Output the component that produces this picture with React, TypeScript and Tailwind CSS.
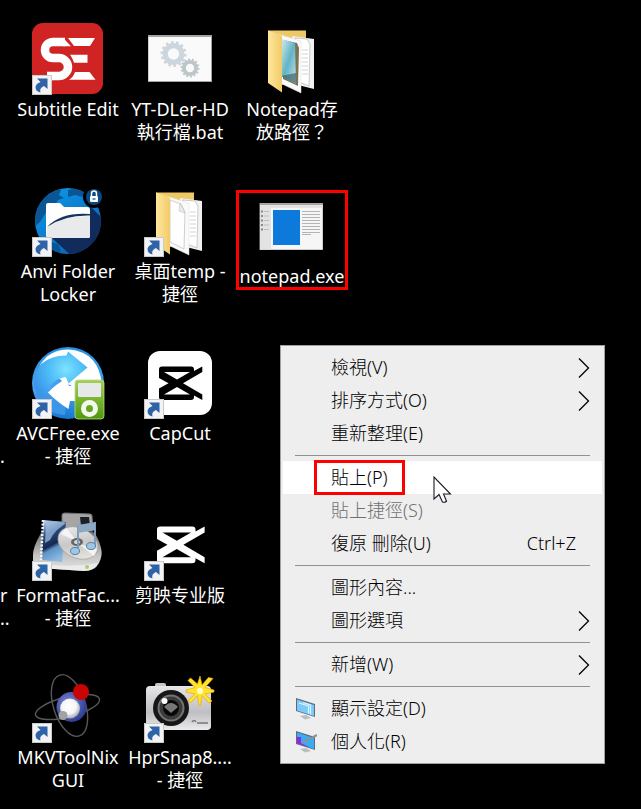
import type { ReactNode } from 'react'

interface DesktopItem {
  id: string
  lines: string[]
  icon: ReactNode
  shortcut?: boolean
  marked?: boolean
}

interface MenuEntry {
  label: string
  hint?: string
  icon?: ReactNode
  submenu?: boolean
  disabled?: boolean
  active?: boolean
}

// ---------- Desktop icons (72x72 canvas) ----------

function Canvas({ children }: { children: ReactNode }) {
  return (
    <svg viewBox="0 0 72 72" className="size-18 overflow-visible" aria-hidden="true">
      {children}
    </svg>
  )
}

function SubtitleEditIcon() {
  return (
    <Canvas>
      <rect width="71" height="71" rx="11" fill="#d02424" />
      <path d="M33 19H21a8 8 0 0 0 0 16h6a9 9 0 0 1 0 18H15" fill="none" stroke="#fff" strokeWidth="8.500" />
      <path d="M31 14.700l8 8.500h-8zM18 48.500l-4 8.700h7z" fill="#fff" />
      <path d="M36 15h27l-5 8H42zM38 31.700h17.500v8H42c-1-3-2-5-4-8zM43 49h14.500l6 7.800H37c3-2 5-4.500 6-7.800z" fill="#fff" />
    </Canvas>
  )
}

function Gear({ cx, cy, r, fill }: { cx: number; cy: number; r: number; fill: string }) {
  return (
    <g fill="none" stroke={fill}>
      <circle cx={cx} cy={cy} r={r * 0.64} strokeWidth={r * 0.4} />
      <circle cx={cx} cy={cy} r={r * 0.88} strokeWidth={r * 0.24} pathLength="28" strokeDasharray="1 1" />
    </g>
  )
}

function BatchFileIcon() {
  return (
    <Canvas>
      <rect x="4" y="12" width="64" height="47" fill="#a3a3a3" />
      <rect x="4.500" y="14" width="62.500" height="44" fill="#fafafa" />
      <Gear cx={29.5} cy={31} r={13} fill="#ccd6dc" />
      <Gear cx={46} cy={45} r={9.5} fill="#bcc6cb" />
    </Canvas>
  )
}

function FolderIcon({ preview = false }: { preview?: boolean }) {
  return (
    <Canvas>
      <defs>
        <linearGradient id="folderCover" x1="0" x2="1">
          <stop offset="0" stopColor="#ffe79c" />
          <stop offset="1" stopColor="#f1cb69" />
        </linearGradient>
        <linearGradient id="folderPhoto" x1="0" y1="0" x2="1" y2="1">
          <stop offset="0" stopColor="#d8eef2" />
          <stop offset="0.500" stopColor="#62b3c4" />
          <stop offset="1" stopColor="#c6e6ea" />
        </linearGradient>
      </defs>
      <path d="M12 7.500h38v50L25 62 12 50z" fill="#efc866" />
      <path d="M36 13l22 3v50l-20-5z" fill="#f2f2f2" />
      <path d="M39 15l12 1 3 5-1 42-10-4z" fill="#fff" stroke="#b5b5b5" strokeWidth="0.700" />
      <path d="M46 27h6M46 31h6M46 35h6M46 39h6M46 43h6M46 47h6M46 51h6" stroke="#c8c8c8" strokeWidth="0.800" />
      <path d="M22 11l23 7v52L24 60z" fill="#fafafa" stroke="#ddd" strokeWidth="0.500" />
      {preview ? (
        <>
          <path d="M27 17l14 3 2 5-1 38-15-7z" fill="#7d7250" />
          <path d="M25 16l14 4 1 41-15-8z" fill="url(#folderPhoto)" />
          <path d="M25 53l15 8V50z" fill="#31505c" opacity="0.600" />
        </>
      ) : (
        <>
          <path d="M26 15l11 4 4 8-1 37-14-7z" fill="#fefefe" stroke="#bcbcbc" strokeWidth="0.700" />
          <path d="M36 18l-1 8 6 2z" fill="#eeece5" stroke="#b5b5b5" strokeWidth="0.500" />
        </>
      )}
      <path d="M12 7.500l12 4q2 1 2 3v55L12 60z" fill="url(#folderCover)" />
    </Canvas>
  )
}

function AnviIcon() {
  return (
    <Canvas>
      <defs>
        <linearGradient id="anviGlobe" x1="0.100" y1="0" x2="0.900" y2="1">
          <stop offset="0" stopColor="#0d9bec" />
          <stop offset="1" stopColor="#0a5cae" />
        </linearGradient>
        <clipPath id="anviClip">
          <circle cx="36" cy="36" r="33" />
        </clipPath>
      </defs>
      <circle cx="36" cy="36" r="33" fill="url(#anviGlobe)" />
      <g clipPath="url(#anviClip)">
        <path d="M3 24l10-14 9-7 7 2-2 5 5 3-6 2-3 5-6 1-4 8-5 8-6 5zM36 5l8-2 10 5-3 4-8-2-7 2zM18 57l8 2 3 6-5 8-6-6z" fill="#0a5694" />
        <path d="M20 53h38V21l14 14v40H44z" fill="#102b5c" />
      </g>
      <path d="M14 20q0-2 2-2h11q2 0 3 2l2 2h23q3 0 3 3v26q0 2-3 2H17q-3 0-3-3z" fill="#fff" />
      <path d="M15 43Q29 31 58 31v20q0 2-2 2H17q-2 0-2-2z" fill="#e9eaec" />
      <path d="M15 42Q29 27 58 29v1.500Q32 30 15 42z" fill="#14365f" />
      <circle cx="62" cy="12" r="11" fill="#000" />
      <circle cx="62" cy="12" r="8" fill="#0b4780" />
      <path d="M59.500 11V8.500a2.500 2.500 0 0 1 5 0V11" fill="none" stroke="#fff" strokeWidth="1.500" />
      <rect x="58" y="11" width="8" height="6" rx="1" fill="#fff" />
      <path d="M60.500 14h3" stroke="#0b4780" strokeWidth="1.200" />
    </Canvas>
  )
}

function AvcIcon() {
  return (
    <Canvas>
      <defs>
        <linearGradient id="avcDisc" x1="0" y1="0" x2="0" y2="1">
          <stop offset="0" stopColor="#2592e5" />
          <stop offset="0.600" stopColor="#4aa3ee" />
          <stop offset="1" stopColor="#1676cf" />
        </linearGradient>
        <radialGradient id="avcArrow" gradientUnits="userSpaceOnUse" cx="34" cy="22" r="34">
          <stop offset="0" stopColor="#7ee3ff" />
          <stop offset="0.500" stopColor="#4fbdf7" />
          <stop offset="1" stopColor="#3b96ea" />
        </radialGradient>
        <linearGradient id="avcPlayer" x1="0" y1="0" x2="0" y2="1">
          <stop offset="0" stopColor="#a6cf58" />
          <stop offset="1" stopColor="#4d9a0b" />
        </linearGradient>
      </defs>
      <circle cx="36" cy="36" r="36" fill="url(#avcDisc)" />
      <path d="M8 18Q18 2 37 2.500 67 5 70 38L50 44 30 34 16 20z" fill="#fff" />
      <path d="M2 37Q3 24 9 17 20 8 34.500 8.500L36 4.500 55.500 20.500 36.500 36.500 33.500 30Q20 32 16 45L34 56 33 68Q5 66 2 37z" fill="url(#avcArrow)" />
      <path d="M16 45.500Q24 37 34.500 31.500L37 39H50V54H38L36.500 62Q25 55 16 45.500z" fill="#fff" />
      <rect x="43" y="33" width="29" height="39" rx="3" fill="url(#avcPlayer)" stroke="#bddd83" strokeWidth="0.800" />
      <rect x="46" y="36" width="23" height="14" rx="1" fill="#e7e8ea" />
      <circle cx="57.500" cy="61.500" r="6" fill="none" stroke="#f5f8ef" strokeWidth="5" />
    </Canvas>
  )
}

// Crossed ribbon shared by both editors
function CutMark() {
  return (
    <path
      fillRule="evenodd"
      d="M18 19.500H47q3 0 3 3V24L58.300 19.500V25L39 36.200 58.300 47.500V53L50 48.500V50q0 3-3 3H18q-3 0-3-3V41.500L24.500 36.200 15 31V22.500q0-3 3-3zM20 25L33 32.500 46 25zM20 47.500H46L33 40z"
    />
  )
}

function CapCutIcon() {
  return (
    <Canvas>
      <rect x="4" y="4" width="64" height="64" rx="12" fill="#fff" />
      <CutMark />
    </Canvas>
  )
}

function JianyingIcon() {
  return (
    <Canvas>
      <g fill="#fff" transform="translate(-3.500 -4) scale(1.100)">
        <CutMark />
      </g>
    </Canvas>
  )
}

function FormatFactoryIcon() {
  return (
    <Canvas>
      <defs>
        <linearGradient id="ffDrive" x1="0" y1="0" x2="0" y2="1">
          <stop offset="0" stopColor="#6f6f6f" />
          <stop offset="0.600" stopColor="#c4c4c4" />
          <stop offset="1" stopColor="#e4e4e4" />
        </linearGradient>
        <linearGradient id="ffFilm" x1="0.200" y1="0" x2="0.500" y2="1">
          <stop offset="0" stopColor="#b8d3ee" />
          <stop offset="0.300" stopColor="#2c4f84" />
          <stop offset="0.600" stopColor="#14284e" />
          <stop offset="0.700" stopColor="#5d94c6" />
          <stop offset="1" stopColor="#8fbbe0" />
        </linearGradient>
        <linearGradient id="ffDisc" x1="0" y1="0" x2="1" y2="1">
          <stop offset="0" stopColor="#f5f5f5" />
          <stop offset="0.500" stopColor="#c8c8c8" />
          <stop offset="1" stopColor="#f2f0e4" />
        </linearGradient>
      </defs>
      <path d="M9 24Q1 38 1 46v7q0 5 6 6l45 3q11 0 15-8 4-8 2-15-3-12-8-16z" fill="url(#ffDrive)" />
      <path d="M4 53Q30 60 66 54q-4 8-14 8L7 59z" fill="#f1f1f1" opacity="0.700" />
      <path d="M30 6q0-2 3-2l25 1q2 0 2 2l1 15-31 2z" fill="#a5a5a5" stroke="#707070" />
      <path d="M48 8h9l1 9h-9z" fill="#1c1f25" />
      <path d="M11 11l23 2-4 40-20-2z" fill="url(#ffFilm)" />
      <path d="M11 11L9 51" stroke="#f1f5f9" strokeWidth="2.500" strokeDasharray="2 1.500" />
      <path d="M14 13q14-2 20 1l-9 7q-5 5-7 10l-5 3z" fill="#a6c3e2" opacity="0.700" />
      <ellipse cx="46" cy="34" rx="21" ry="15" transform="rotate(25 46 34)" fill="url(#ffDisc)" stroke="#a2a2a2" strokeWidth="0.700" />
      <path d="M46 33l-17-8 5-6zM47 35l18 5-3 7z" fill="#fff" opacity="0.700" />
      <ellipse cx="45" cy="33" rx="6" ry="4" fill="#666" />
      <ellipse cx="45" cy="33" rx="3" ry="2" fill="#d8d8d8" />
      <path d="M46 42V17l17-3v23" fill="none" stroke="#7f9cb8" strokeWidth="2" />
      <path d="M46 16l17-2v7l-17 3z" fill="#8ba8c4" />
      <ellipse cx="43" cy="42" rx="4.500" ry="3.500" fill="#9cc7e8" stroke="#5a7f9f" />
      <ellipse cx="59" cy="37" rx="4.500" ry="3.500" fill="#9cc7e8" stroke="#5a7f9f" />
      <circle cx="55" cy="58" r="2" fill="#a8cf6f" />
    </Canvas>
  )
}

function MkvIcon() {
  return (
    <Canvas>
      <defs>
        <radialGradient id="mkvCore" cx="0.400" cy="0.400" r="0.600">
          <stop offset="0" stopColor="#8390d6" />
          <stop offset="1" stopColor="#303f94" />
        </radialGradient>
        <radialGradient id="mkvLight" cx="0.450" cy="0.400" r="0.600">
          <stop offset="0" stopColor="#fff" />
          <stop offset="0.600" stopColor="#f6f6f6" />
          <stop offset="1" stopColor="#a7a7ae" />
        </radialGradient>
      </defs>
      <g fill="none" stroke="#585858" strokeWidth="1.400">
        <ellipse cx="37.500" cy="34.500" rx="16" ry="32" transform="rotate(-18 37.500 34.500)" />
        <ellipse cx="35.500" cy="36" rx="33" ry="10" transform="rotate(-14 35.500 36)" />
      </g>
      <circle cx="39.500" cy="36" r="15" fill="url(#mkvCore)" />
      <circle cx="38" cy="37.500" r="10" fill="url(#mkvLight)" />
      <circle cx="31" cy="44.500" r="4.500" fill="#a2a2a2" />
      <circle cx="49" cy="21" r="8" fill="#c90404" />
    </Canvas>
  )
}

function SnapIcon() {
  return (
    <Canvas>
      <defs>
        <linearGradient id="snapBody" x1="0" y1="0" x2="0" y2="1">
          <stop offset="0" stopColor="#e6e6e8" />
          <stop offset="0.600" stopColor="#bfbfc3" />
          <stop offset="1" stopColor="#eaeaec" />
        </linearGradient>
      </defs>
      <rect x="11" y="12" width="11" height="6" rx="2" fill="#c6c6c6" />
      <rect x="2" y="15" width="65" height="44" rx="4" fill="url(#snapBody)" />
      <circle cx="27" cy="37" r="18" fill="#161616" />
      <circle cx="27" cy="37" r="12.500" fill="#3b3b3b" stroke="#737373" strokeWidth="2" />
      <circle cx="27" cy="37" r="8" fill="#070707" />
      <path d="M20 36q7-8 14 0l-7 6z" fill="#777" />
      <circle cx="20.500" cy="30" r="3" fill="#fff" />
      <path d="M48 51q2-3 4 0M53 52h11" fill="none" stroke="#777" strokeWidth="1.500" />
      <path
        d="M56 5l2 9 6-7 .500-.500 4.500 1-8 9 9 2.500v2l-9 2 7 7-3 2-7-7.500-1.500 10h-1.500l-1.500-10-7 7.500-2.500-2.500 7-6.500-9-2v-2l9-2.500-7-7 2.500-2.500 7 6z"
        fill="#ffe32c"
        stroke="#e8a900"
        strokeWidth="0.700"
      />
      <circle cx="56" cy="20" r="3" fill="#fffad0" />
    </Canvas>
  )
}

function AppWindowIcon() {
  return (
    <Canvas>
      <rect x="3.500" y="13" width="63.500" height="47" fill="#a6a6a6" />
      <rect x="4" y="15" width="62.500" height="44.500" fill="#f6f6f6" />
      <path d="M4 15h62.500v3H4zM4 18h11v41.500H4z" fill="#e3e3e3" />
      <rect x="17" y="20" width="27" height="35" fill="#0c79db" />
      <path d="M46 21.500h18M46 24.500h18M46 27.500h18M46 30.500h18M46 33.500h18M46 36.500h18M46 39.500h18M46 42.500h18M46 44.500h9" stroke="#b4b4b4" />
      <path d="M5 21.500h2M5 26h2M5 30.500h2M5 35h2M5 39.500h2" stroke="#888" strokeWidth="2" />
      <path d="M8 21.500h5M8 26h5M8 30.500h5M8 35h5M8 39.500h5" stroke="#bdbdbd" />
    </Canvas>
  )
}

function ShortcutArrow() {
  return (
    <svg viewBox="0 0 20 20" className="absolute bottom-0 left-0 size-5" aria-hidden="true">
      <rect x="0.500" y="0.500" width="19" height="19" fill="#f3f3f3" stroke="#c9c9c9" />
      <path d="M5 3.500h10.500V14L12 11q-5 2-3.500 6.500Q3.500 16.500 3.500 12 4 8.500 8.500 7z" fill="#2e63a8" />
    </svg>
  )
}

// ---------- Menu icons ----------

function MonitorIcon({ brush = false }: { brush?: boolean }) {
  return (
    <svg viewBox="0 0 22 22" className="size-5.5" aria-hidden="true">
      <path d="M5 18l6-1 5 3-6 1.500z" fill="#b9bec2" />
      <path d="M1 0l19 6v13L1 13z" fill="#5e6b74" />
      <path d="M2 1.500L19 7v11L2 12.500z" fill={brush ? '#38adf4' : '#7bcbfa'} />
      {brush ? (
        <>
          <path d="M2 6H6v6l9 4.500-13-4z" fill="#8b2be2" />
          <path d="M7 12L22 4" stroke="#88939b" strokeWidth="2" />
        </>
      ) : (
        <path d="M4 5l9.500 3v7.500M8 4.500l7.500 2.500v9.500" fill="none" stroke="#dcf3ff" strokeWidth="1.200" />
      )}
    </svg>
  )
}

function SubmenuArrow() {
  return (
    <svg viewBox="0 0 12 20" className="h-5 w-3" fill="none" stroke="#000" strokeWidth="1.300" aria-hidden="true">
      <path d="M1 0.500L10.500 10 1 19.500" />
    </svg>
  )
}

function Pointer() {
  return (
    <svg viewBox="0 0 19 28" className="h-7 w-[19px]" aria-hidden="true">
      <path d="M1 1v22l5-4.500 3.500 7.500q2 .8 4-.8L10.500 18H17.500z" fill="#fff" stroke="#1b1b2b" strokeWidth="1.100" />
    </svg>
  )
}

// Row by row, as the desktop lays them out
const items: DesktopItem[][] = [
  [
    { id: 'subtitle-edit', lines: ['Subtitle Edit'], icon: <SubtitleEditIcon />, shortcut: true },
    { id: 'yt-dler', lines: ['YT-DLer-HD', '執行檔.bat'], icon: <BatchFileIcon /> },
    { id: 'notepad-path', lines: ['Notepad存', '放路徑？'], icon: <FolderIcon preview /> },
  ],
  [
    { id: 'anvi', lines: ['Anvi Folder', 'Locker'], icon: <AnviIcon />, shortcut: true },
    { id: 'temp', lines: ['桌面temp -', '捷徑'], icon: <FolderIcon />, shortcut: true },
    { id: 'notepad', lines: ['notepad.exe'], icon: <AppWindowIcon />, marked: true },
  ],
  [
    { id: 'avc', lines: ['AVCFree.exe', '- 捷徑'], icon: <AvcIcon />, shortcut: true },
    { id: 'capcut', lines: ['CapCut'], icon: <CapCutIcon />, shortcut: true },
  ],
  [
    { id: 'format-factory', lines: ['FormatFac...', '- 捷徑'], icon: <FormatFactoryIcon />, shortcut: true },
    { id: 'jianying', lines: ['剪映专业版'], icon: <JianyingIcon />, shortcut: true },
  ],
  [
    { id: 'mkvtoolnix', lines: ['MKVToolNix', 'GUI'], icon: <MkvIcon />, shortcut: true },
    { id: 'hprsnap', lines: ['HprSnap8....', '- 捷徑'], icon: <SnapIcon />, shortcut: true },
  ],
]

// Ends of the labels in the column that runs off the left edge
const edgeLabels = [
  ['', ''],
  ['', ''],
  ['', '.'],
  ['r', '..'],
  ['', ''],
]

const menuGroups: MenuEntry[][] = [
  [
    { label: '檢視(V)', submenu: true },
    { label: '排序方式(O)', submenu: true },
    { label: '重新整理(E)' },
  ],
  [
    { label: '貼上(P)', active: true },
    { label: '貼上捷徑(S)', disabled: true },
    { label: '復原 刪除(U)', hint: 'Ctrl+Z' },
  ],
  [{ label: '圖形內容...' }, { label: '圖形選項', submenu: true }],
  [{ label: '新增(W)', submenu: true }],
  [
    { label: '顯示設定(D)', icon: <MonitorIcon /> },
    { label: '個人化(R)', icon: <MonitorIcon brush /> },
  ],
]

function DesktopTile({ item }: { item: DesktopItem }) {
  return (
    <button
      type="button"
      className={`relative flex w-28 flex-col items-center self-start ${item.marked ? 'mt-[5px] h-[100px]' : ''}`}
    >
      <span className="relative mb-[3px] block size-18">
        {item.icon}
        {item.shortcut && <ShortcutArrow />}
      </span>
      {item.lines.map((line) => (
        <span key={line} className="block whitespace-nowrap leading-[23px]">
          {line}
        </span>
      ))}
      {item.marked && <span className="absolute inset-0 border-3 border-[#f00]" />}
    </button>
  )
}

function MenuRow({ entry }: { entry: MenuEntry }) {
  return (
    <button
      type="button"
      role="menuitem"
      disabled={entry.disabled}
      className={`relative flex h-[33px] w-full items-center pr-3 text-left ${entry.active ? 'bg-white' : ''} ${
        entry.disabled ? 'text-[#707070]' : 'text-black'
      }`}
    >
      <span className="flex w-12 shrink-0 items-center pl-3">{entry.icon}</span>
      <span className="grow whitespace-nowrap">{entry.label}</span>
      {entry.hint && <span className="pr-3.5">{entry.hint}</span>}
      {entry.submenu && <SubmenuArrow />}
      {entry.active && (
        <>
          <span className="absolute -inset-y-px left-[31px] w-[91px] border-3 border-[#f00]" />
          <span className="absolute left-[150px] top-[15px] z-10">
            <Pointer />
          </span>
        </>
      )}
    </button>
  )
}

function ContextMenu() {
  return (
    <div
      role="menu"
      className="absolute left-[280px] top-[345px] w-[325px] border border-[#a0a0a0] bg-[#eee] px-0.5 py-[5px] font-light"
    >
      {menuGroups.map((group, index) => (
        <div key={group[0].label}>
          {index > 0 && <div role="separator" className="mx-3 my-[5px] h-px bg-[#919191]" />}
          {group.map((entry) => (
            <MenuRow key={entry.label} entry={entry} />
          ))}
        </div>
      ))}
    </div>
  )
}

export default function App() {
  return (
    <main className="relative min-h-screen overflow-hidden bg-black pt-[23px] font-['Noto_Sans','Noto_Sans_CJK_TC',sans-serif] text-[18px] text-white">
      {items.map((row, index) => (
        <div key={row[0].id} className="flex h-[162px] last-of-type:h-auto">
          <div className="w-3 shrink-0 pt-[75px] leading-[23px]">
            <div className="h-[23px]">{edgeLabels[index][0]}</div>
            <div className="h-[23px]">{edgeLabels[index][1]}</div>
          </div>
          {row.map((item) => (
            <DesktopTile key={item.id} item={item} />
          ))}
        </div>
      ))}
      <ContextMenu />
    </main>
  )
}
